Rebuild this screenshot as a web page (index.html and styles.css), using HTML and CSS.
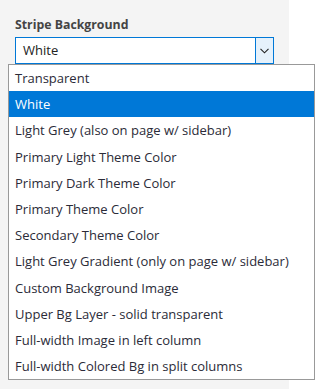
FILE: index.html
```html
<!DOCTYPE html>
<html>
<head>
<meta charset="utf-8">
<link rel="stylesheet" href="styles.css">
</head>
<body>
<div class="page">
	<div class="panel">
		<div class="field">
			<div class="field_label">Stripe Background</div>
			<div class="fake_select">
				<span class="fake_value">White</span>
				<span class="fake_btn">
					<svg width="9" height="6" viewBox="0 0 9 6"><path d="M0.5 0.8 L4.5 4.8 L8.5 0.8" fill="none" stroke="#222" stroke-width="1.1"/></svg>
				</span>
			</div>
			<ul class="drop_list">
				<li>Transparent</li>
				<li class="selected">White</li>
				<li>Light Grey (also on page w/ sidebar)</li>
				<li>Primary Light Theme Color</li>
				<li>Primary Dark Theme Color</li>
				<li>Primary Theme Color</li>
				<li>Secondary Theme Color</li>
				<li>Light Grey Gradient (only on page w/ sidebar)</li>
				<li>Custom Background Image</li>
				<li>Upper Bg Layer - solid transparent</li>
				<li>Full-width Image in left column</li>
				<li>Full-width Colored Bg in split columns</li>
			</ul>
		</div>
	</div>
	<div class="side"></div>
</div>
</body>
</html>
```
FILE: styles.css
```css
html, body{
	margin:0;
	padding:0;
	height:100%;
}
body{
	font-family:"Open Sans","Noto Sans",sans-serif;
	font-size:13px;
	color:#333;
	background:#fff;
}
.page{
	display:flex;
	height:389px;
}
.panel{
	width:289px;
	background:#f4f4f4;
	padding:16px 0 0 15px;
	box-sizing:border-box;
}
.side{
	flex:1;
	background:#fff;
}
.field{
	position:relative;
}
.field_label{
	font-weight:bold;
	color:#444;
	font-size:12.3px;
	line-height:17px;
	margin-bottom:4px;
}
.fake_select{
	display:flex;
	width:259px;
	height:27px;
	box-sizing:border-box;
	border:1px solid #0078d7;
	background:#fff;
}
.fake_value{
	flex:1;
	padding-left:7px;
	line-height:25px;
	color:#222;
}
.fake_btn{
	width:17px;
	background:#e5f1fb;
	border-left:1px solid #0078d7;
	display:flex;
	align-items:center;
	justify-content:center;
}
.drop_list{
	position:absolute;
	left:-7px;
	top:48px;
	width:307px;
	margin:0;
	padding:0;
	list-style:none;
	background:#fff;
	border:1px solid #999;
	box-sizing:border-box;
}
.drop_list li{
	height:26.2px;
	line-height:26px;
	padding-left:6px;
	white-space:nowrap;
	color:#2b2b38;
}
.drop_list li.selected{
	background:#0078d7;
	color:#fff;
}
```
